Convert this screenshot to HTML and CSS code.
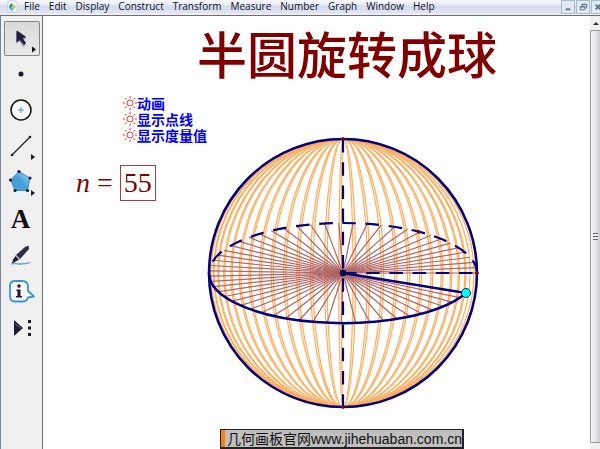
FILE: index.html
```html
<!DOCTYPE html>
<html lang="zh-CN">
<head>
<meta charset="utf-8">
<title>半圆旋转成球</title>
<link rel="stylesheet" href="styles.css">
</head>
<body>
<header class="menubar">
  <svg class="doc-icon" viewBox="0 0 12 13" aria-hidden="true">
    <path d="M1 .5h8l2 2v10H1z" fill="#fdfdfe" stroke="#c3cad6"/>
    <path d="M6 3a4 4 0 0 0-3.500 5.500L6 7z" fill="#2f8d9c"/>
    <path d="M2.500 8a4 4 0 0 0 4 3L6 7z" fill="#4aa8d8"/>
    <path d="M6.500 3.500L10 7 6.500 10.500z" fill="#e0c34c"/>
  </svg>
  <nav class="menus">
    <button type="button">File</button>
    <button type="button">Edit</button>
    <button type="button">Display</button>
    <button type="button">Construct</button>
    <button type="button">Transform</button>
    <button type="button">Measure</button>
    <button type="button">Number</button>
    <button type="button">Graph</button>
    <button type="button">Window</button>
    <button type="button">Help</button>
  </nav>
  <div class="window-buttons">
    <button type="button" aria-label="Minimize"><svg viewBox="0 0 13 13"><path d="M4 9h5" stroke="#5f7184" stroke-width="2"/></svg></button>
    <button type="button" aria-label="Restore"><svg viewBox="0 0 13 13"><path d="M5.500 5.500v-2h5v4h-2M5 4h6M3.500 6.500h5v3h-5zM3 6h6" fill="none" stroke="#5f7184"/></svg></button>
    <button type="button" aria-label="Close"><svg viewBox="0 0 13 13"><path d="M4 4l5 5M9 4l-5 5" stroke="#5f7184" stroke-width="2"/></svg></button>
  </div>
</header>
<main class="workspace">
  <div class="toolbox">
    <button type="button" class="tool selected" aria-label="Selection">
      <svg viewBox="0 0 36 34">
        <path d="M14 9v12l3-3 4 6 3-2-4-5 4-1z" fill="#a9a9ad" transform="translate(-2 1)"/>
        <path d="M13 9v11l3-2.500 4 5 1.500-1.500-3.500-5 3.500-1z" fill="#211d42" stroke="#211d42"/>
        <path d="M28 24.500v6l4-3z" fill="#111"/>
      </svg>
    </button>
    <button type="button" class="tool" aria-label="Point"><svg viewBox="0 0 36 34"><circle cx="17" cy="16" r="2.500" fill="#1b1836"/></svg></button>
    <button type="button" class="tool" aria-label="Compass"><svg viewBox="0 0 36 34"><circle cx="17" cy="16" r="10" fill="#f8f8f8" stroke="#111" stroke-width="1.500"/><path d="M14 16h6M17 13v6" stroke="#419bd5"/></svg></button>
    <button type="button" class="tool" aria-label="Straightedge"><svg viewBox="0 0 36 34"><path d="M8 25L26 7" stroke="#222" stroke-width="1.200"/><circle cx="8" cy="25" r="1.300" fill="#1b1836"/><circle cx="26" cy="7" r="1.300" fill="#1b1836"/><path d="M27 24v6l4-3z" fill="#1b1836"/></svg></button>
    <button type="button" class="tool" aria-label="Polygon">
      <svg viewBox="1 0 36 34">
        <defs><linearGradient id="poly" x1="0" y1="1" x2="1" y2="0"><stop offset=".5" stop-color="#479fd6"/><stop offset="1" stop-color="#a5d5f2"/></linearGradient></defs>
        <path d="M16 5.500L27 12l-2.500 12.500H12L7.500 14z" fill="url(#poly)" stroke="#3f93c9"/>
        <g fill="#1b1836"><circle cx="16" cy="5.500" r="1.600"/><circle cx="27" cy="12" r="1.600"/><circle cx="24.500" cy="24.500" r="1.600"/><circle cx="12" cy="24.500" r="1.600"/><circle cx="7.500" cy="14" r="1.600"/><path d="M28 24v6l4-3z"/></g>
      </svg>
    </button>
    <button type="button" class="tool letter" aria-label="Text">A</button>
    <button type="button" class="tool" aria-label="Marker"><svg viewBox="1 -1 36 34"><path d="M8 25c3-1 4 0 8 0s7 0 11-1.500" fill="none" stroke="#51a5d8" stroke-width="1.300"/><path d="M22 8l3.500-1.500L26 10l-9 10-4-4z" fill="#302b43"/><path d="M12.500 17l3.500 3.500-4 2.500-3 1.500 1-4z" fill="#211d33"/><path d="M12 16l5 5" stroke="#bbb" stroke-width=".8"/></svg></button>
    <button type="button" class="tool" aria-label="Information"><svg viewBox="1 -1 36 34"><path d="M12 6h7q6 0 6 6v4l6 5.500-6 1q-1 4-6 4h-7q-5 0-5-5V11q0-5 5-5z" fill="#f8f8f8" stroke="#3d95d0" stroke-width="1.800" stroke-linejoin="round"/><circle cx="16" cy="11" r="1.700" fill="#1b1836"/><path d="M13.500 14.500h4V21h1.500v1.500h-6V21h1.500v-5h-1z" fill="#1b1836"/></svg></button>
    <button type="button" class="tool" aria-label="Custom tools"><svg viewBox="0 -2 36 34"><path d="M10 8l9 8-9 8z" fill="#211d33"/><path d="M11.500 12l5 4" stroke="#77748a"/><path d="M24 8h3v3h-3zM24 14.500h3v3h-3zM24 21h3v3h-3z" fill="#1b1836"/></svg></button>
  </div>
  <section class="sketch">
    <h1 class="title">半圆旋转成球</h1>
    <div class="actions">
      <button type="button"><svg viewBox="0 0 14 14"><use href="#sun"/></svg>动画</button>
      <button type="button"><svg viewBox="0 0 14 14"><use href="#sun"/></svg>显示点线</button>
      <button type="button"><svg viewBox="0 0 14 14"><use href="#sun"/></svg>显示度量值</button>
    </div>
    <div class="parameter"><i>n</i><span>=</span><output>55</output></div>
    <svg class="sphere" viewBox="-138 -138 276 276" role="img" aria-label="半圆旋转成球">
      <defs>
        <g id="sun" fill="none" stroke="#f33"><circle cx="7" cy="7" r="3"/><path d="M7 0v2M7 12v2M0 7h2M12 7h2M2 2l1.500 1.500M12 2l-1.500 1.500M2 12l1.500-1.500M12 12l-1.500-1.500"/></g>
      </defs>
      <g id="meridians" class="meridians"></g>
      <g id="spokes" class="spokes"></g>
      <g class="outline">
        <circle r="134"/>
        <path d="M-134 0A134 50 0 0 0 123 20L0 0"/>
        <path class="dashed" d="M134 0A134 50 0 0 0-134 0"/>
        <path class="dashed" d="M0-134V134"/>
        <path class="dashed" d="M0 0H134"/>
      </g>
      <g class="pins"><circle cy="-134" r="1.300"/><circle cy="134" r="1.300"/><circle cx="134" r="1.300"/><circle cx="76" cy="-41" r="1.300"/></g>
      <circle r="3" fill="#000080" stroke="#000040"/>
      <circle cx="123" cy="20" r="4.500" fill="#0ff" stroke="#083050"/>
    </svg>
    <a class="site" href="#">几何画板官网<span>www.jihehuaban.com.cn</span></a>
  </section>
  <div class="scrollbar">
    <button type="button" aria-label="Scroll up"><svg viewBox="0 0 12 14"><path d="M3 9l3-3 3 3z" fill="#333"/></svg></button>
    <div class="thumb"><span class="grip"></span></div>
    <div class="track-end"></div>
  </div>
</main>
<script src="sphere.js"></script>
</body>
</html>
```
FILE: styles.css
```css
* { box-sizing: border-box; }
html, body { height: 100%; }
body {
  margin: 0;
  display: flex;
  flex-direction: column;
  overflow: hidden;
  background: #fff;
  font-family: "Open Sans", "Noto Sans CJK SC", sans-serif;
}
button { margin: 0; padding: 0; border: 0; background: none; font: inherit; color: inherit; }
svg { display: block; }

.menubar {
  flex: none;
  display: flex;
  align-items: flex-start;
  height: 16px;
  padding-left: 7px;
  overflow: hidden;
  background: linear-gradient(#f7f9fd 0, #e7ebf6 5px, #d5dbee 6px, #dfe4f4 13px, #eef0f5 14px);
  border-bottom: 1px solid #6e6e6e;
}
.doc-icon { width: 11px; height: 13px; }
.menus {
  display: flex;
  gap: 9px;
  margin-left: 6px;
  font-size: 10px;
  line-height: 13px;
  color: #101018;
}
.window-buttons { display: flex; gap: 1px; margin-left: auto; margin-right: -5px; }
.window-buttons button { width: 14px; height: 14px; border: 1px solid #a9bccf; background: #e1ebf6; }
.window-buttons svg { width: 12px; height: 12px; }

.workspace { flex: 1; display: flex; min-height: 0; }
.toolbox {
  flex: none;
  display: flex;
  flex-direction: column;
  align-items: center;
  gap: 1px;
  width: 43px;
  padding-top: 5px;
  background: #f0f0f0;
  border-left: 1px solid #79849a;
  border-right: 1px solid #707070;
}
.tool { width: 36px; height: 35px; border-radius: 2px; }
.tool svg { width: 36px; height: 34px; }
.tool.selected { box-shadow: inset 0 0 0 1px #858585; background: linear-gradient(#d9d9d9, #e9e9e9); }
.tool.letter { padding-right: 2px; font: bold 27px/34px "Liberation Serif", serif; color: #111; }

.sketch { flex: 1; position: relative; min-width: 0; overflow: hidden; background: #fff; }
.title {
  position: absolute;
  left: 154px;
  top: 4px;
  margin: 0;
  font: 500 50px/64px "Noto Sans CJK SC", sans-serif;
  color: #800000;
  white-space: nowrap;
}
.actions { position: absolute; left: 80px; top: 79px; display: grid; justify-items: start; }
.actions button {
  display: flex;
  align-items: center;
  font: bold 14px/16px "Noto Sans CJK SC", sans-serif;
  color: #00f;
}
.actions svg { width: 14px; height: 14px; }
.parameter {
  position: absolute;
  left: 33px;
  top: 149px;
  display: flex;
  align-items: center;
  gap: 7px;
  font: 28px/34px "Liberation Serif", serif;
  color: #800000;
}
.parameter output { padding: 0 3px; border: 1px solid #a04040; }
.sphere { position: absolute; left: 162px; top: 119px; width: 276px; height: 276px; }
.meridians { fill: none; stroke: #ffac5c; stroke-width: 1.200; }
.spokes { stroke: #b06464; stroke-width: 1.200; }
.outline { fill: none; stroke: #000080; stroke-width: 2.500; }
.outline .dashed { stroke-width: 2.200; stroke-dasharray: 13.500 9.700; }
.pins { fill: #f00; stroke: #500; stroke-width: 1; }
.site {
  position: absolute;
  left: 177px;
  top: 413px;
  padding: 0 0 0 6px;
  border: solid #222;
  border-width: 1px 2px 2px 1px;
  background: #c0c0c0;
  box-shadow: inset 4px 0 #ff8000;
  font: 14px/16px "Noto Sans CJK SC", sans-serif;
  color: #111;
  text-decoration: none;
  white-space: nowrap;
}
.site span { font-family: "Liberation Sans", sans-serif; }

.scrollbar {
  flex: none;
  display: flex;
  flex-direction: column;
  width: 10px;
  overflow: hidden;
  background: #f0f0f0;
}
.scrollbar button { height: 14px; }
.scrollbar svg { width: 12px; height: 14px; }
.thumb {
  flex: 1;
  display: flex;
  align-items: center;
  justify-content: center;
  border: 1px solid #999;
  border-right: 0;
  border-radius: 2px 0 0 2px;
  background: linear-gradient(90deg, #f6f6f6, #e6e6e8 50%, #c9c9d0);
}
.grip { width: 5px; height: 7px; background: repeating-linear-gradient(#666 0 1px, #eee 1px 3px); }
.track-end { height: 6px; }
```
FILE: sphere.js
```js
const NS = 'http://www.w3.org/2000/svg';
const R = 134, H = 50, N = 55;
const sweep = 336.6 * Math.PI / 180;

function addPath(parent, d) {
  const path = document.createElementNS(NS, 'path');
  path.setAttribute('d', d);
  document.getElementById(parent).appendChild(path);
}

for (let k = 0; k <= N; k++) {
  const t = sweep * k / N;
  const x = R * Math.cos(t);
  addPath('meridians', `M0 ${-R}A${Math.abs(x)} ${R} 0 0 ${x > 0 ? 1 : 0} 0 ${R}`);
  addPath('spokes', `M0 0L${x} ${-H * Math.sin(t)}`);
}
```
